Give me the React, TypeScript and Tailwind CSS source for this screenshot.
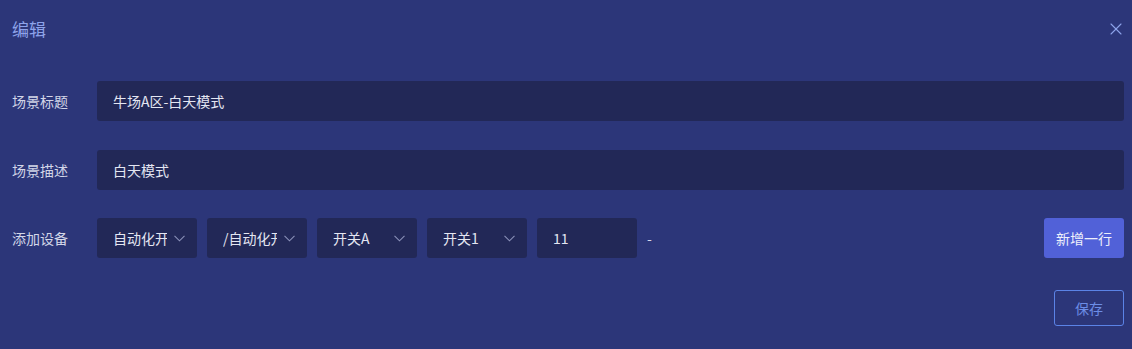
import { X } from 'lucide-react'

const font = { fontFamily: '"Noto Sans CJK SC", "Noto Sans", sans-serif' }

function Chevron() {
  return (
    <svg width="11" height="7" viewBox="0 0 11 7" fill="none" className="shrink-0">
      <path d="M0.5 0.8 L5.5 5.8 L10.5 0.8" stroke="#8a90b8" strokeWidth="1.1" />
    </svg>
  )
}

function Select({ value }: { value: string }) {
  return (
    <div className="flex h-10 w-[100px] items-center rounded-[3px] bg-[#222857] pl-4 pr-3">
      <span className="w-[54px] overflow-hidden whitespace-nowrap text-sm text-[#e4e6f2]">{value}</span>
      <span className="ml-auto">
        <Chevron />
      </span>
    </div>
  )
}

function Row({ label, className = '', children }: { label: string; className?: string; children: React.ReactNode }) {
  return (
    <div className={`flex items-center ${className}`}>
      <div className="w-[85px] shrink-0 text-sm text-[#d3d6e8]">{label}</div>
      {children}
    </div>
  )
}

export default function App() {
  return (
    <div style={font} className="h-[349px] w-[1132px] bg-[#2c3679] pl-3 pr-2 pt-[17px]">
      <div className="flex items-center justify-between">
        <h2 className="text-[17px] leading-6 text-[#8ea3ea]">编辑</h2>
        <X className="mr-[-2px] h-5 w-5 text-[#8ea3ea]" strokeWidth={1.3} />
      </div>

      <div className="mt-[40px] flex flex-col">
        <Row label="场景标题">
          <div className="flex h-10 flex-1 items-center rounded-[3px] bg-[#222857] px-4 text-sm text-[#e4e6f2]">
            牛场A区-白天模式
          </div>
        </Row>
        <Row label="场景描述" className="mt-[29px]">
          <div className="flex h-10 flex-1 items-center rounded-[3px] bg-[#222857] px-4 text-sm text-[#e4e6f2]">
            白天模式
          </div>
        </Row>
        <Row label="添加设备" className="mt-[28px]">
          <div className="flex flex-1 items-center gap-[10px]">
            <Select value="自动化开关" />
            <Select value="/自动化开关" />
            <Select value="开关A" />
            <Select value="开关1" />
            <div className="flex h-10 w-[100px] items-center rounded-[3px] bg-[#222857] px-4 text-sm text-[#e4e6f2]">
              11
            </div>
            <span className="text-sm text-[#d3d6e8]">-</span>
            <button className="ml-auto h-10 w-20 rounded-[3px] bg-[#5161d8] text-sm text-[#eef0fb]">
              新增一行
            </button>
          </div>
        </Row>
      </div>

      <div className="mt-8 flex justify-end">
        <button className="h-9 w-[70px] rounded-[3px] border border-[#5b83e6] text-sm text-[#6c8de6]">
          保存
        </button>
      </div>
    </div>
  )
}
